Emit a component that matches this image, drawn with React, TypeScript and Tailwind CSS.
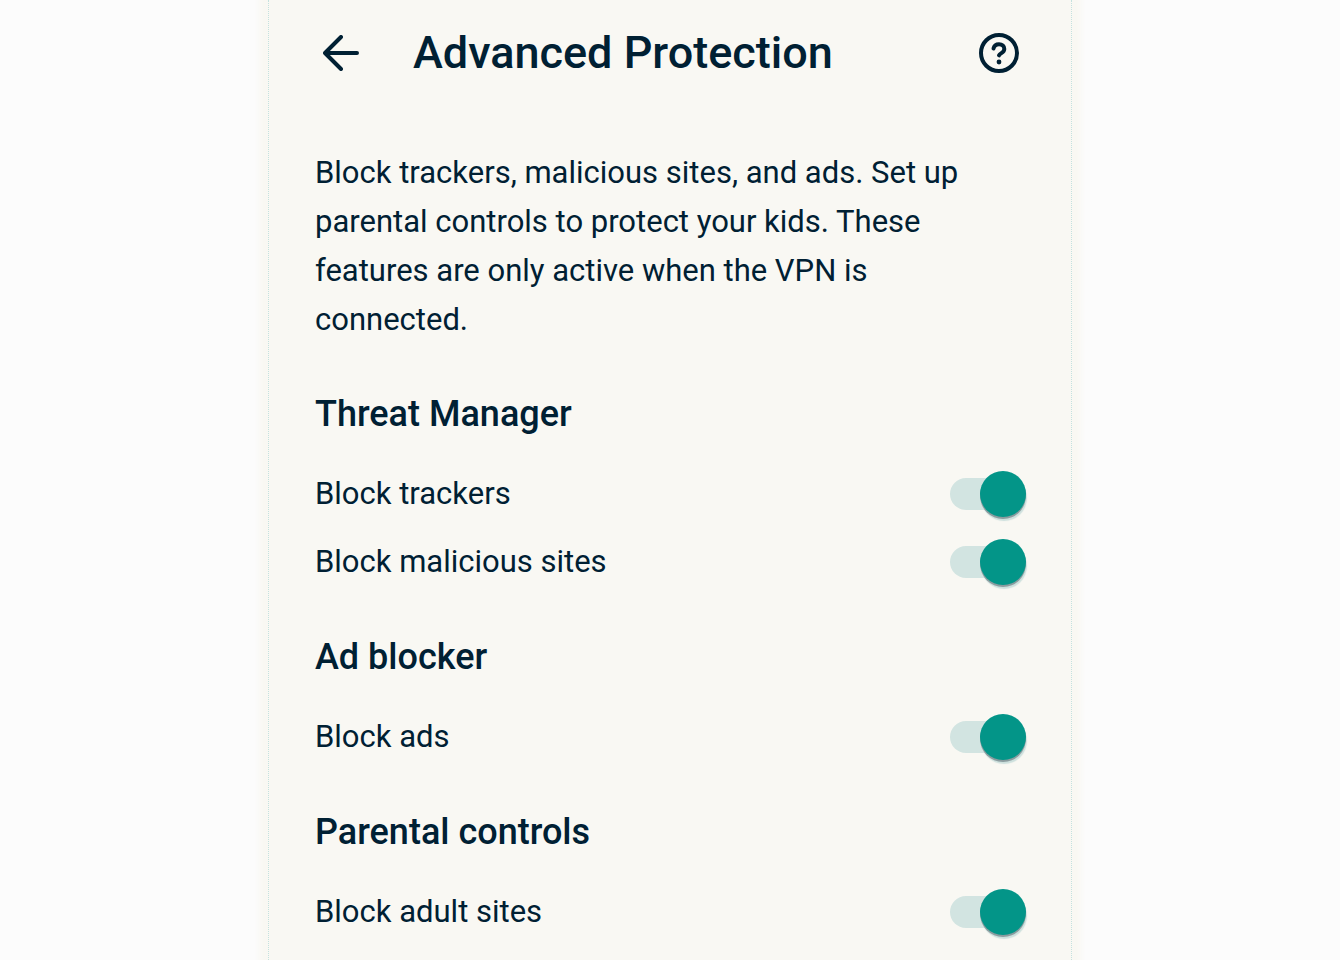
import { ReactNode, useId, useState } from "react";

interface ToggleRowProps {
  label: string;
}

function ToggleRow(props: ToggleRowProps) {
  const id = useId();
  const [enabled, setEnabled] = useState(true);

  return (
    <div className="flex items-center justify-between h-[68px]">
      <label htmlFor={id} className="text-[31px] leading-[48px]">
        {props.label}
      </label>
      <div className="relative flex items-center w-[76px] h-[46px]">
        <input
          id={id}
          type="checkbox"
          role="switch"
          checked={enabled}
          onChange={(e) => setEnabled(e.target.checked)}
          className="peer appearance-none w-full h-8 rounded-full bg-gray-300 checked:bg-[#d2e4e1] cursor-pointer"
        />
        <span className="absolute left-0 top-0 size-[46px] rounded-full bg-white shadow-[0_2px_0_#8b9c9f,1px_4px_1px_#cde0dd] pointer-events-none peer-checked:left-auto peer-checked:right-0 peer-checked:bg-[#039588]" />
      </div>
    </div>
  );
}

interface SectionProps {
  title: string;
  children: ReactNode;
}

function Section(props: SectionProps) {
  return (
    <section>
      <h2 className="mb-[22px] text-[36px] leading-[48px] font-medium">
        {props.title}
      </h2>
      {props.children}
    </section>
  );
}

export default function App() {
  return (
    <div className="min-h-screen bg-[#fcfcfc] overflow-hidden">
      <main className="mx-auto w-full max-w-[804px] min-h-screen pl-[46px] pr-[45px] border-x border-dotted border-[#c4e2df] bg-[#f9f8f3] shadow-[0_0_6px_9px_#f9f8f3] font-[Roboto,sans-serif] text-[#002033]">
        <header className="flex items-center h-[106px] pl-2 pr-[7px]">
          <button type="button" aria-label="Back" className="cursor-pointer">
            <svg
              viewBox="0 0 36 36"
              className="size-9"
              fill="none"
              stroke="currentColor"
              strokeWidth="4"
              strokeLinecap="round"
              strokeLinejoin="round"
            >
              <path d="M34 18H2.500M18 2L2 18L18 34" />
            </svg>
          </button>
          <h1 className="ml-[54px] text-[45px] leading-[56px] font-medium">
            Advanced Protection
          </h1>
          <button type="button" aria-label="Help" className="ml-auto cursor-pointer">
            <svg
              viewBox="0 0 40 40"
              className="size-10"
              fill="none"
              stroke="currentColor"
              strokeWidth="4"
              strokeLinecap="round"
            >
              <circle cx="20" cy="20" r="18" />
              <path d="M14.500 15.500C15.200 12.600 17.200 11.300 20 11.300C23.200 11.300 25.300 13.200 25.300 16C25.300 19.800 21.200 19.800 20 22.300" />
              <circle cx="20" cy="29" r="2.400" fill="currentColor" stroke="none" />
            </svg>
          </button>
        </header>
        <p className="mt-[42px] pr-9 text-[31px] leading-[49px]">
          Block trackers, malicious sites, and ads. Set up parental controls to
          protect your kids. These features are only active when the VPN is
          connected.
        </p>
        <div className="flex flex-col gap-[37px] mt-[46px]">
          <Section title="Threat Manager">
            <ToggleRow label="Block trackers" />
            <ToggleRow label="Block malicious sites" />
          </Section>
          <Section title="Ad blocker">
            <ToggleRow label="Block ads" />
          </Section>
          <Section title="Parental controls">
            <ToggleRow label="Block adult sites" />
          </Section>
        </div>
      </main>
    </div>
  );
}
